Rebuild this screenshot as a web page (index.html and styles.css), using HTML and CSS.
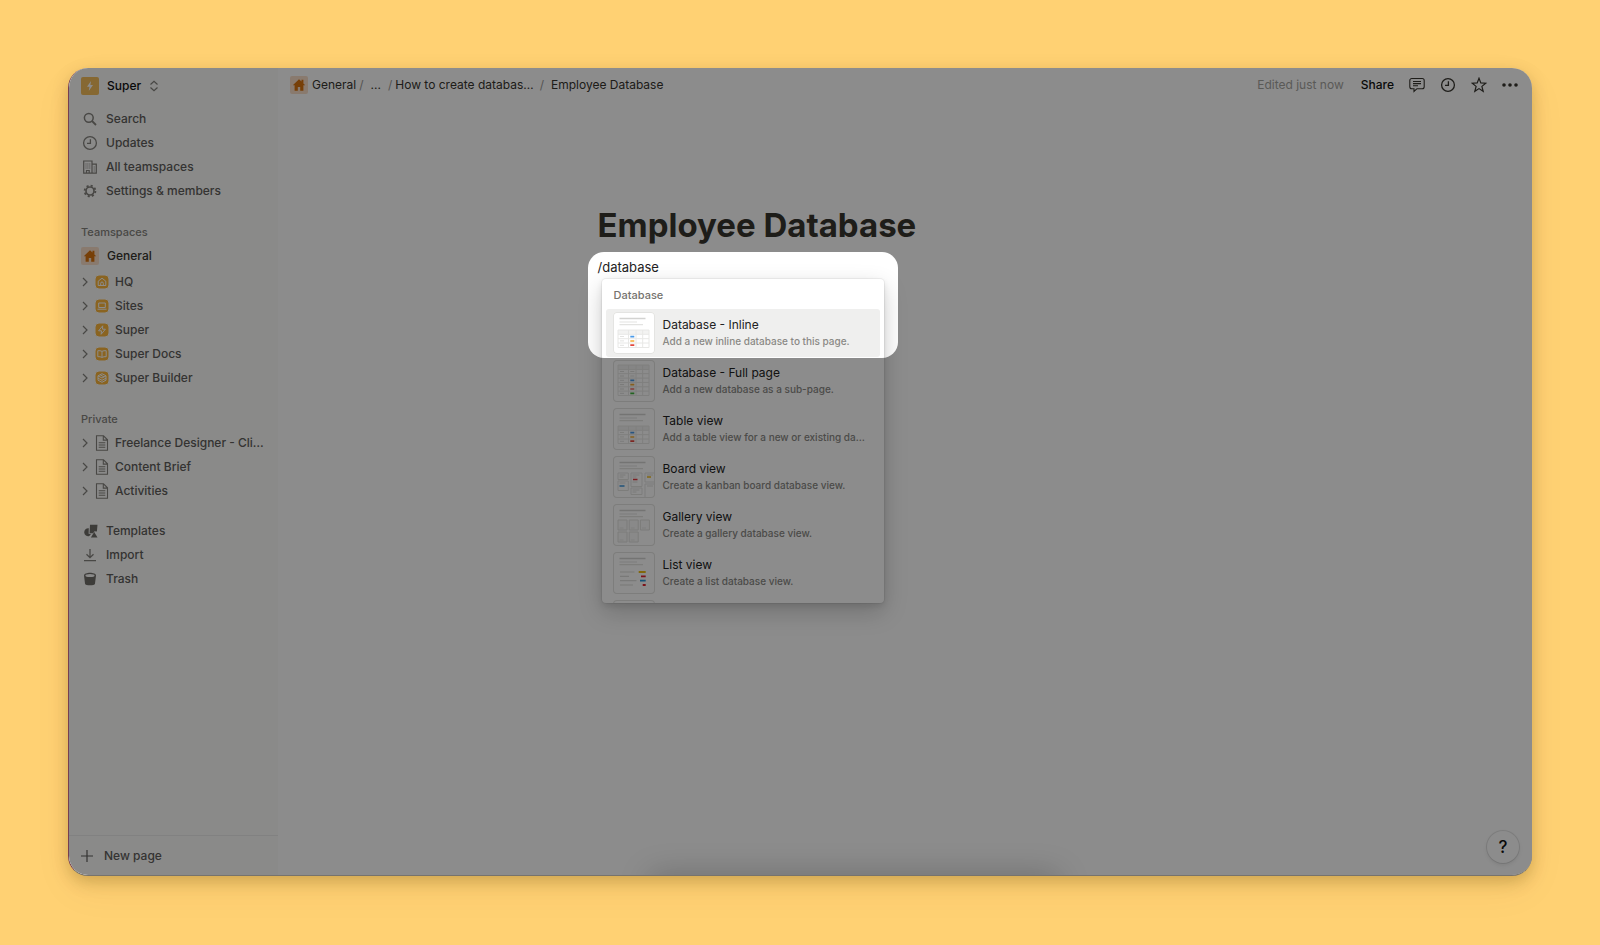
FILE: index.html
```html
<!DOCTYPE html>
<html lang="en">
<head>
<meta charset="utf-8">
<title>Employee Database</title>
<link rel="stylesheet" href="styles.css">
</head>
<body>
<svg class="defs" aria-hidden="true">
  <symbol id="house" viewBox="0 0 18 18"><rect width="18" height="18" rx="2" fill="#fadec9"/><path d="M9 3.200 2.800 9.200h1.800v5.600h3.200V11h2.400v3.800h3.200V9.200h1.800l-1.800-1.800V3.800h-1.900v1.600z" fill="#d9730d"/></symbol>
  <symbol id="chevron" viewBox="0 0 8 10"><path d="M2 1l4 4-4 4" fill="none" stroke="currentColor" stroke-width="1.200"/></symbol>
  <symbol id="doc" viewBox="0 0 14 16"><path d="M1.500.8h7l4 4v10.400h-11zM8.300.8v4.300h4.200M3.700 7.700h6.600M3.700 10h6.600M3.700 12.300h6.600" fill="none" stroke="currentColor" stroke-width="1.100"/></symbol>
  <symbol id="clock" viewBox="0 0 16 16"><circle cx="8" cy="8" r="6.400" fill="none" stroke="currentColor" stroke-width="1.300"/><path d="M8.400 4.300v4.100H5" fill="none" stroke="currentColor" stroke-width="1.300"/></symbol>
  <symbol id="lines" viewBox="0 0 42 42"><path d="M6.500 6.500h26" stroke="#d3d3d1" stroke-width="1.500"/><path d="M6.500 10h17.500M6.500 12.700h23.500" stroke="#e3e3e1" stroke-width="1.200"/></symbol>
  <symbol id="table" viewBox="0 0 42 42">
    <rect x="5" y="18" width="31" height="4" fill="#f3f3f2"/>
    <path d="M5 18h31v17.500H5zM5 22.300h31M5 26.700h31M5 31h31M15.500 18v17.500M23 18v17.500M29.700 18v17.500" fill="none" stroke="#e8e8e6" stroke-width="1"/>
    <path d="M7 24.500h4M7 28.900h4M7 33.300h4" stroke="#e3e3e1"/>
    <path d="M17.300 24.600h4" stroke="#4a9ae8" stroke-width="1.700"/><path d="M17.300 29h4" stroke="#f3ac35" stroke-width="1.700"/><path d="M17.300 33.200h4" stroke="#e2483f" stroke-width="1.700"/>
  </symbol>
</svg>
<div class="window">
  <aside class="sidebar">
    <button class="workspace"><svg width="18" height="18" viewBox="0 0 18 18"><rect width="18" height="18" rx="2" fill="#f4bd5c"/><path d="M10 4 6 9.700h2.500L7.800 14l4.200-5.900H9.400z" fill="#fff"/></svg><span>Super</span><svg class="muted" width="10" height="12" viewBox="0 0 10 12"><path d="M1.500 4.500 5 1.300l3.500 3.200M1.500 7.500 5 10.700l3.500-3.200" fill="none" stroke="currentColor" stroke-width="1.200"/></svg></button>
    <nav class="group first">
      <a href="#" class="row"><svg class="ico" viewBox="0 0 16 16"><circle cx="6.800" cy="6.800" r="4.400" fill="none" stroke="currentColor" stroke-width="1.500"/><path d="m10 10 4 4" stroke="currentColor" stroke-width="1.800"/></svg>Search</a>
      <a href="#" class="row"><svg class="ico"><use href="#clock"/></svg>Updates</a>
      <a href="#" class="row"><svg class="ico" viewBox="0 0 16 16"><path d="M1.700 2h8.300v12.200H1.700zM10 5.200h4.300v9H10M4.500 14v-2.500h2.700V14" fill="none" stroke="currentColor" stroke-width="1.200"/><path d="M4 4.500v6M5.900 4.500v6M7.800 4.500v6M12.200 7.500v5" stroke="currentColor" stroke-width="1" stroke-dasharray="1 1"/></svg>All teamspaces</a>
      <a href="#" class="row"><svg class="ico" viewBox="0 0 16 16"><circle cx="8" cy="8" r="4" fill="none" stroke="currentColor" stroke-width="1.700"/><circle cx="8" cy="8" r="5.400" fill="none" stroke="currentColor" stroke-width="1.800" stroke-dasharray="2.100 2.141"/></svg>Settings &amp; members</a>
    </nav>
    <h2 class="label">Teamspaces</h2>
    <nav class="group">
      <a href="#" class="row strong"><svg class="badge18"><use href="#house"/></svg>General</a>
      <a href="#" class="row sub"><svg class="chev"><use href="#chevron"/></svg><svg class="team" viewBox="0 0 14 14"><rect width="14" height="14" rx="4" fill="#fbb73d"/><path d="M3.200 6.200 7 3.200l3.800 3v4.300H3.200zM5.700 10.500V8.300a1.300 1.300 0 0 1 2.600 0v2.200"/></svg>HQ</a>
      <a href="#" class="row sub"><svg class="chev"><use href="#chevron"/></svg><svg class="team" viewBox="0 0 14 14"><rect width="14" height="14" rx="4" fill="#fbb73d"/><path d="M3.700 4h6.600v4.500H3.700zM2.500 10.200h9"/></svg>Sites</a>
      <a href="#" class="row sub"><svg class="chev"><use href="#chevron"/></svg><svg class="team" viewBox="0 0 14 14"><rect width="14" height="14" rx="4" fill="#fbb73d"/><path d="M7.700 2.800 3.600 7.800h2.900l-.4 3.500 4.300-5.100H7.500z"/></svg>Super</a>
      <a href="#" class="row sub"><svg class="chev"><use href="#chevron"/></svg><svg class="team" viewBox="0 0 14 14"><rect width="14" height="14" rx="4" fill="#fbb73d"/><path d="M7 4.300C5.800 3.700 4.300 3.600 2.800 3.700v6c1.500-.1 3 0 4.200.7 1.200-.7 2.700-.8 4.200-.7v-6C9.700 3.600 8.200 3.700 7 4.300zv6"/></svg>Super Docs</a>
      <a href="#" class="row sub"><svg class="chev"><use href="#chevron"/></svg><svg class="team" viewBox="0 0 14 14"><rect width="14" height="14" rx="4" fill="#fbb73d"/><path d="m7 2.700 4 2.100v4.400l-4 2.100-4-2.100V4.800zM3 4.800 7 7l4-2.200M3 7.200l4 2.100 4-2.100M5 3.700l4 2.200"/></svg>Super Builder</a>
    </nav>
    <h2 class="label">Private</h2>
    <nav class="group">
      <a href="#" class="row sub"><svg class="chev"><use href="#chevron"/></svg><svg class="doc"><use href="#doc"/></svg>Freelance Designer - Cli…</a>
      <a href="#" class="row sub"><svg class="chev"><use href="#chevron"/></svg><svg class="doc"><use href="#doc"/></svg>Content Brief</a>
      <a href="#" class="row sub"><svg class="chev"><use href="#chevron"/></svg><svg class="doc"><use href="#doc"/></svg>Activities</a>
    </nav>
    <nav class="group tools">
      <a href="#" class="row"><svg class="ico solid" viewBox="0 0 16 16" fill="currentColor"><path d="M8 1.800h7.500l-.6 6.800-2.400-.4-1.400 2H7.600z"/><path d="M6.800 5.200a4 4 0 1 0 .5 7.800L9 11l-2.400-.2z"/><path d="m12.200 9 3.300 5.500H8.900z"/></svg>Templates</a>
      <a href="#" class="row"><svg class="ico" viewBox="0 0 16 16"><path d="M8 2v8.500M4.500 7.200 8 10.700l3.500-3.500M2 13.700h12" fill="none" stroke="currentColor" stroke-width="1.300"/></svg>Import</a>
      <a href="#" class="row"><svg class="ico solid" viewBox="0 0 16 16"><path d="M2 4.500C2 .8 14 .8 14 4.500l-1 8.200c-.3 2.200-9.700 2.200-10 0z" fill="currentColor"/><ellipse cx="8" cy="4.600" rx="4.600" ry="1.500" fill="#fbfbfa"/></svg>Trash</a>
    </nav>
    <button class="newpage"><svg width="12" height="12" viewBox="0 0 12 12"><path d="M6 0v12M0 6h12" stroke="currentColor" stroke-width="1.200"/></svg>New page</button>
  </aside>
  <main class="main">
    <header class="topbar">
      <nav class="crumbs"><svg class="badge18"><use href="#house"/></svg><a href="#" class="home">General</a><i>/</i><a href="#" class="more">...</a><i>/</i><a href="#" class="parent">How to create databas…</a><i>/</i><a href="#" class="current">Employee Database</a></nav>
      <div class="actions">
        <span class="edited">Edited just now</span>
        <button class="share">Share</button>
        <button aria-label="Comments"><svg width="16" height="16" viewBox="0 0 16 16"><path d="M2.800 1.500h10.400a2 2 0 0 1 2 2v6.200a2 2 0 0 1-2 2H8L5 14.500v-2.800H2.800a2 2 0 0 1-2-2V3.500a2 2 0 0 1 2-2zM4 4.500h8M4 6.600h8M4 8.700h5" fill="none" stroke="currentColor" stroke-width="1.100"/></svg></button>
        <button aria-label="History"><svg width="16" height="16"><use href="#clock"/></svg></button>
        <button aria-label="Favorite"><svg width="16" height="16" viewBox="0 0 16 16"><path d="m8 1.200 1.800 4.700 5 .3-3.900 3.200 1.300 4.900L8 11.600l-4.200 2.700 1.300-4.900L1.200 6.200l5-.3z" fill="none" stroke="currentColor" stroke-width="1.200"/></svg></button>
        <button aria-label="More"><svg width="16" height="16" viewBox="0 0 16 16" fill="currentColor"><circle cx="2" cy="8" r="1.800"/><circle cx="8" cy="8" r="1.800"/><circle cx="14" cy="8" r="1.800"/></svg></button>
      </div>
    </header>
    <article class="page">
      <h1>Employee Database</h1>
      <div class="block">
        <p>/database</p>
        <div class="menu">
          <h3>Database</h3>
          <button class="item active"><svg class="thumb"><use href="#lines"/><use href="#table"/></svg><span><b>Database - Inline</b><small>Add a new inline database to this page.</small></span></button>
          <button class="item"><svg class="thumb" viewBox="0 0 42 42"><path d="M5 5h31v4.300H5z" fill="#f3f3f2"/><path d="M5 5h31v30.500H5zM5 9.400h31M5 13.700h31M5 18.100h31M5 22.400h31M5 26.800h31M5 31.100h31M15.500 5v30.500M23 5v30.500M29.700 5v30.500" fill="none" stroke="#e8e8e6"/><path d="M7 11.500h4M7 16h4M7 20.300h4M7 24.600h4M7 29h4M7 33.300h4M17.300 11.500h4M17.300 16h4" stroke="#dededc"/><path d="M17.300 20.300h4" stroke="#4a9ae8" stroke-width="1.700"/><path d="M17.300 24.600h4" stroke="#f3ac35" stroke-width="1.700"/><path d="M17.300 29h4" stroke="#ee6c64" stroke-width="1.700"/><path d="M17.300 33.300h4" stroke="#3fb53c" stroke-width="1.700"/></svg><span><b>Database - Full page</b><small>Add a new database as a sub-page.</small></span></button>
          <button class="item"><svg class="thumb"><use href="#lines"/><use href="#table"/></svg><span><b>Table view</b><small>Add a table view for a new or existing da…</small></span></button>
          <button class="item"><svg class="thumb" viewBox="0 0 42 42"><use href="#lines"/><path d="M5 17h10.300v6.500H5zM5 25h10.300v9.500H5zM18 17h11v13.500H18zM18 32h11v6.500H18zM42 17H32v9h10M42 28H32v14" fill="none" stroke="#e3e3e1"/><path d="M6.500 19h6M6.500 21h4M6.500 27h6M19.500 19h7M19.500 21h4M19.500 26h5M19.500 34h7M19.500 36h4M34 19h6M34 30h6" stroke="#dededc"/><path d="M6.500 30h5" stroke="#3b97dc" stroke-width="1.700"/><path d="M20 23.500h4.500" stroke="#e2383f" stroke-width="1.700"/><path d="M34 21h4" stroke="#efbd20" stroke-width="1.700"/></svg><span><b>Board view</b><small>Create a kanban board database view.</small></span></button>
          <button class="item"><svg class="thumb" viewBox="0 0 42 42"><use href="#lines"/><path d="M5 16h9v10H5zM16.200 16h9v10h-9zM27.400 16h9v10h-9zM5 28h9v10H5zM16.200 28h9v10h-9z" fill="#fafaf9" stroke="#e0e0de"/><path d="M6.500 24h4M17.700 24h4M29 24h4M6.500 36h4M17.700 36h4" stroke="#e8e8e6"/></svg><span><b>Gallery view</b><small>Create a gallery database view.</small></span></button>
          <button class="item"><svg class="thumb" viewBox="0 0 42 42"><use href="#lines"/><path d="M7 20h14.500M7 24.300h9M7 28.700h16.500M7 33h13" stroke="#dcdcda" stroke-width="1.200"/><path d="M25.700 20h7" stroke="#edbc15" stroke-width="1.800"/><path d="M28 24.300h4.700M29.700 33h3" stroke="#e2232f" stroke-width="1.800"/><path d="M27 28.700h5.700" stroke="#2b97d8" stroke-width="1.800"/></svg><span><b>List view</b><small>Create a list database view.</small></span></button>
          <button class="item" aria-label="More views"><svg class="thumb"><use href="#lines"/></svg></button>
        </div>
        <div class="spotlight"></div>
      </div>
    </article>
    <div class="dock"></div>
    <button class="help" aria-label="Help">?</button>
  </main>
</div>
</body>
</html>
```
FILE: styles.css
```css
* { box-sizing: border-box; }
body {
  margin: 0;
  height: 100vh;
  padding: 68px 68px 69px;
  background: #ffd173;
  font: 500 12px/24px Inter, "Liberation Sans", sans-serif;
  color: #37352f;
}
.defs { position: absolute; width: 0; height: 0; }
a { color: inherit; text-decoration: none; }
button { border: 0; padding: 0; background: none; font: inherit; color: inherit; cursor: pointer; }
svg { display: block; flex: none; }
h1, h2, h3, p { margin: 0; }

.window {
  position: relative;
  display: flex;
  height: 100%;
  overflow: hidden;
  border-radius: 20px;
  border-left: 1px solid #753f52;
  border-bottom: 1px solid #77736c;
  background: #fff;
  box-shadow: 0 6px 16px rgba(90, 60, 0, .26), 0 14px 40px rgba(90, 60, 0, .05);
}

.sidebar {
  display: flex;
  flex-direction: column;
  flex: none;
  width: 209px;
  background: #fbfbfa;
  color: #5f5e5b;
}
.workspace {
  display: flex;
  align-items: center;
  gap: 8px;
  height: 35px;
  padding-left: 12px;
  color: #111;
}
.muted { color: #82817c; }
.group { display: flex; flex-direction: column; }
.group.first { padding-top: 4px; }
.row {
  display: flex;
  align-items: center;
  gap: 8px;
  height: 24px;
  padding-left: 13px;
  white-space: nowrap;
}
.ico { width: 16px; height: 16px; color: #85837e; }
.ico.solid { color: #706e69; }
.badge18 { width: 18px; height: 18px; }
.row.strong { padding-left: 12px; color: #37352f; margin-bottom: 2px; }
.row.sub { gap: 6px; padding-left: 12px; }
.chev { width: 8px; height: 10px; color: #85837e; }
.team { width: 14px; height: 14px; fill: none; stroke: #fff; stroke-width: 1; }
.doc { width: 14px; height: 16px; color: #85837e; }
.label {
  padding: 17px 0 0 12px;
  font-size: 11px;
  line-height: 24px;
  font-weight: 500;
  color: #85837e;
}
.tools { padding-top: 16px; }
.newpage {
  display: flex;
  align-items: center;
  gap: 11px;
  height: 40px;
  margin-top: auto;
  padding-left: 12px;
  border-top: 1px solid #ececeb;
}

.main { position: relative; flex: 1; min-width: 0; }
.topbar { display: flex; justify-content: space-between; align-items: center; height: 34px; padding: 0 14px 0 12px; }
.crumbs { display: flex; align-items: center; font-weight: 400; white-space: nowrap; }
.crumbs i { font-style: normal; color: #9b9a97; padding: 0 3px; }
.home { padding-left: 4px; }
.more { padding: 0 4px; }
.parent { padding-right: 3px; }
.current { padding-left: 4px; }
.actions { display: flex; align-items: center; gap: 15px; font-weight: 400; }
.edited { color: #a5a49f; }
.share { font-weight: 500; color: #111; padding-left: 2px; }

.page { max-width: 615px; margin: 0 auto; padding-top: 100px; }
h1 { font-size: 33px; line-height: 46px; font-weight: 700; white-space: nowrap; }
.block { position: relative; padding-top: 7px; }
.block p { font-size: 13px; line-height: 24px; font-weight: 400; color: #222; }
.menu {
  position: absolute;
  left: 4px;
  top: 31px;
  width: 282px;
  height: 324px;
  padding: 4px 4px 0;
  overflow: hidden;
  border-radius: 4px;
  background: #fff;
  box-shadow: 0 0 0 1px rgba(15, 15, 15, .05), 0 3px 6px rgba(15, 15, 15, .1), 0 9px 24px rgba(15, 15, 15, .2);
}
.menu h3 { padding: 0 0 2px 8px; font-size: 11px; line-height: 24px; font-weight: 500; color: #75736e; }
.item {
  display: flex;
  align-items: center;
  gap: 8px;
  width: 100%;
  height: 48px;
  padding-left: 7px;
  border-radius: 3px;
  text-align: left;
}
.item.active { background: #efefee; }
.thumb { width: 42px; height: 42px; border-radius: 4px; background: #fff; box-shadow: inset 0 0 0 1px #e4e4e2; }
.item b { display: block; font-size: 12px; line-height: 16px; font-weight: 400; color: #222; }
.item small { display: block; font-size: 10px; line-height: 16px; font-weight: 500; color: #8a8985; white-space: nowrap; }
.spotlight {
  position: absolute;
  z-index: 5;
  left: -10px;
  top: 4px;
  width: 310px;
  height: 106px;
  border-radius: 16px;
  box-shadow: 0 0 0 2000px rgba(0, 0, 0, .45);
  pointer-events: none;
}
.dock {
  position: absolute;
  left: 30%;
  right: 38%;
  bottom: -20px;
  height: 16px;
  box-shadow: 0 0 32px 4px rgba(0, 0, 0, .24);
}
.help {
  position: absolute;
  right: 13px;
  bottom: 12px;
  width: 32px;
  height: 32px;
  border-radius: 50%;
  background: #fff;
  box-shadow: 0 0 0 1px rgba(15, 15, 15, .1), 0 2px 4px rgba(15, 15, 15, .1);
  font-size: 17px;
  color: #111;
}
```
